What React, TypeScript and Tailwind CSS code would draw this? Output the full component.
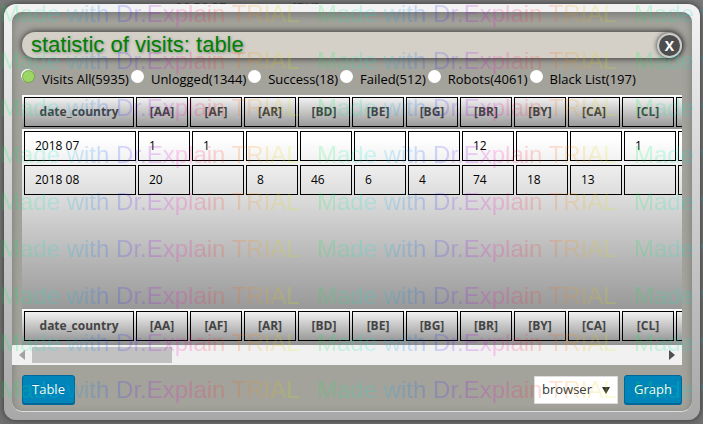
import React, { useState } from 'react';
import clsx from 'clsx';

const countries = ['[AA]', '[AF]', '[AR]', '[BD]', '[BE]', '[BG]', '[BR]', '[BY]', '[CA]', '[CL]', '[CN]'];

const rows = [
  { date: '2018 07', values: ['1', '1', '', '', '', '', '12', '', '', '1', ''] },
  { date: '2018 08', values: ['20', '', '8', '46', '6', '4', '74', '18', '13', '', ''] },
];

const filters = [
  { id: 'all', label: 'Visits All(5935)' },
  { id: 'unlogged', label: 'Unlogged(1344)' },
  { id: 'success', label: 'Success(18)' },
  { id: 'failed', label: 'Failed(512)' },
  { id: 'robots', label: 'Robots(4061)' },
  { id: 'blacklist', label: 'Black List(197)' },
];

const buttonClass =
  'h-[29px] rounded-[3px] border border-[#006799] bg-[#0085ba] text-[13px] text-white shadow-[0_1px_0_#006799] [text-shadow:0_-1px_1px_#006799]';

function HeaderCells() {
  return (
    <tr>
      {['date_country', ...countries].map((name, i) => (
        <th
          key={name}
          scope="col"
          className={clsx(
            'h-[30px] border border-black bg-linear-to-b from-[#f0f0f0] to-[#9b9b9b] p-0 text-center text-[12px] leading-4 font-bold text-[#444]',
            i === 0 ? 'w-[110px]' : 'w-[52px]'
          )}
        >
          {name}
        </th>
      ))}
    </tr>
  );
}

function StatisticTable() {
  return (
    <div className="mx-[10px] overflow-hidden">
      {/* Head */}
      <div className="h-[34px] bg-linear-to-b from-white to-[#8f8f8f]">
        <table className="w-[706px] table-fixed border-separate border-spacing-[2px]">
          <thead>
            <HeaderCells />
          </thead>
        </table>
      </div>

      {/* Body */}
      <div className="flow-root min-h-[180px] bg-linear-to-b from-white from-5% via-[#d4d4d4] via-45% to-[#999]">
        <table className="-mt-[2px] w-[708px] table-fixed border-separate border-spacing-x-[2px] border-spacing-y-[4px]">
          <tbody>
            {rows.map((row) => (
              <tr key={row.date}>
                <td className="h-[30px] w-[112px] border border-black px-[10px] py-0 text-[12px] leading-4">{row.date}</td>
                {row.values.map((value, i) => (
                  <td key={i} className="h-[30px] w-[52px] border border-black px-[10px] py-0 text-[12px] leading-4">
                    {value}
                  </td>
                ))}
              </tr>
            ))}
          </tbody>
        </table>
      </div>

      {/* Foot */}
      <div className="h-[36px] bg-linear-to-b from-white to-[#8f8f8f]">
        <table className="w-[706px] table-fixed border-separate border-spacing-[2px]">
          <tfoot>
            <HeaderCells />
          </tfoot>
        </table>
      </div>
    </div>
  );
}

function ScrollBar() {
  return (
    <div className="mr-[10px] flex h-5 items-center bg-[#f1f1f1]">
      <button type="button" aria-label="Scroll left" className="flex w-5 justify-center">
        <svg viewBox="0 0 6 10" className="h-[10px] w-[6px]">
          <path d="M6 0v10L0 5z" fill="#a3a3a3" />
        </svg>
      </button>
      <div className="flex-1">
        <div className="h-4 w-[140px] bg-[#c1c1c1]" />
      </div>
      <button type="button" aria-label="Scroll right" className="flex w-5 justify-center">
        <svg viewBox="0 0 6 10" className="h-[10px] w-[6px]">
          <path d="M0 0v10l6-5z" fill="#505050" />
        </svg>
      </button>
    </div>
  );
}

function Watermark() {
  return (
    <div
      aria-hidden="true"
      className="pointer-events-none absolute inset-0 overflow-hidden pt-[1px] font-['Liberation_Sans',sans-serif] opacity-18 select-none"
    >
      {Array.from({ length: 9 }, (_, line) => (
        <div key={line} className="flex h-[47px] w-max">
          {Array.from({ length: 3 }, (_, i) => (
            <span
              key={i}
              className="w-[317px] shrink-0 bg-[linear-gradient(90deg,#00f040_0%,#00f0e0_17%,#0040ff_35%,#9000f0_47%,#ff00c0_56%,#ff2020_68%,#ff9000_80%,#d0ff00_94%)] bg-clip-text text-[24px] leading-[26px] whitespace-nowrap text-transparent"
            >
              Made with Dr.Explain TRIAL
            </span>
          ))}
        </div>
      ))}
    </div>
  );
}

export default function App() {
  const [filter, setFilter] = useState('all');
  const [chart, setChart] = useState('browser');

  return (
    <div className="relative min-h-screen overflow-hidden bg-linear-to-b from-[#797979] to-[#707070] pb-1 font-['Open_Sans','Noto_Sans',sans-serif] text-black">
      {/* Page behind the dialog */}
      <div className="flex h-1 items-start gap-[66px] overflow-hidden pl-[175px] text-[13px] leading-[14px] text-[#333]">
        <span>06:56:27</span>
        <span>[BU]</span>
      </div>

      <div className="mr-[3px] ml-1 rounded-[12px] bg-linear-to-b from-[#f3f3f3] to-[#a8a8a8] p-2 shadow-[0_0_6px_#333]">
        <div className="rounded-[10px] border-b border-[#ddd] bg-[#a3a29b] pt-5 pb-[7px] shadow-[inset_0_3px_8px_#777]">
          {/* Title */}
          <div className="mx-[10px] flex h-[26px] items-center justify-between rounded-[13px] bg-[#d4d0c8] pl-[9px] shadow-[0_0_7px_#222]">
            <h1 className="font-['Liberation_Sans',sans-serif] text-[22px] leading-[26px] text-[#008000] [text-shadow:1px_1px_3px_#888]">
              statistic of visits: table
            </h1>
            <button
              type="button"
              aria-label="Close"
              className="size-[25px] rounded-full border-2 border-[#ccc] bg-[#4d4d4d] text-[14px] leading-[19px] font-bold text-white shadow-[0_0_5px_#333]"
            >
              X
            </button>
          </div>

          {/* Filters */}
          <div className="mx-[10px] flex h-[37px] items-center gap-[2px] pt-1 text-[13px] leading-4 whitespace-nowrap">
            {filters.map((f) => (
              <label key={f.id} className="flex items-center gap-[7px]">
                <input
                  type="radio"
                  name="filter"
                  checked={filter === f.id}
                  onChange={() => setFilter(f.id)}
                  className="mb-1 size-[13px] appearance-none rounded-full bg-white checked:border checked:border-[#70a848] checked:bg-[#9ed665] checked:shadow-[-1px_-1px_0_#fff]"
                />
                {f.label}
              </label>
            ))}
          </div>

          <StatisticTable />
          <ScrollBar />

          {/* Actions */}
          <div className="mx-[10px] mt-[10px] flex items-center">
            <button type="button" className={clsx(buttonClass, 'w-[53px]')}>
              Table
            </button>
            <div className="relative ml-auto">
              <select
                aria-label="Graph type"
                value={chart}
                onChange={(e) => setChart(e.target.value)}
                className="block h-7 w-[84px] appearance-none border border-[#ddd] bg-white pl-[7px] text-[13px] text-[#32373c]"
              >
                <option value="browser">browser</option>
                <option value="country">country</option>
              </select>
              <svg viewBox="0 0 8 7" className="pointer-events-none absolute top-[11px] right-[8px] h-[7px] w-2">
                <path d="M0 0h8L4 7z" fill="#333" />
              </svg>
            </div>
            <button type="button" className={clsx(buttonClass, 'ml-[6px] w-[58px]')}>
              Graph
            </button>
          </div>
        </div>
      </div>

      <Watermark />
    </div>
  );
}
